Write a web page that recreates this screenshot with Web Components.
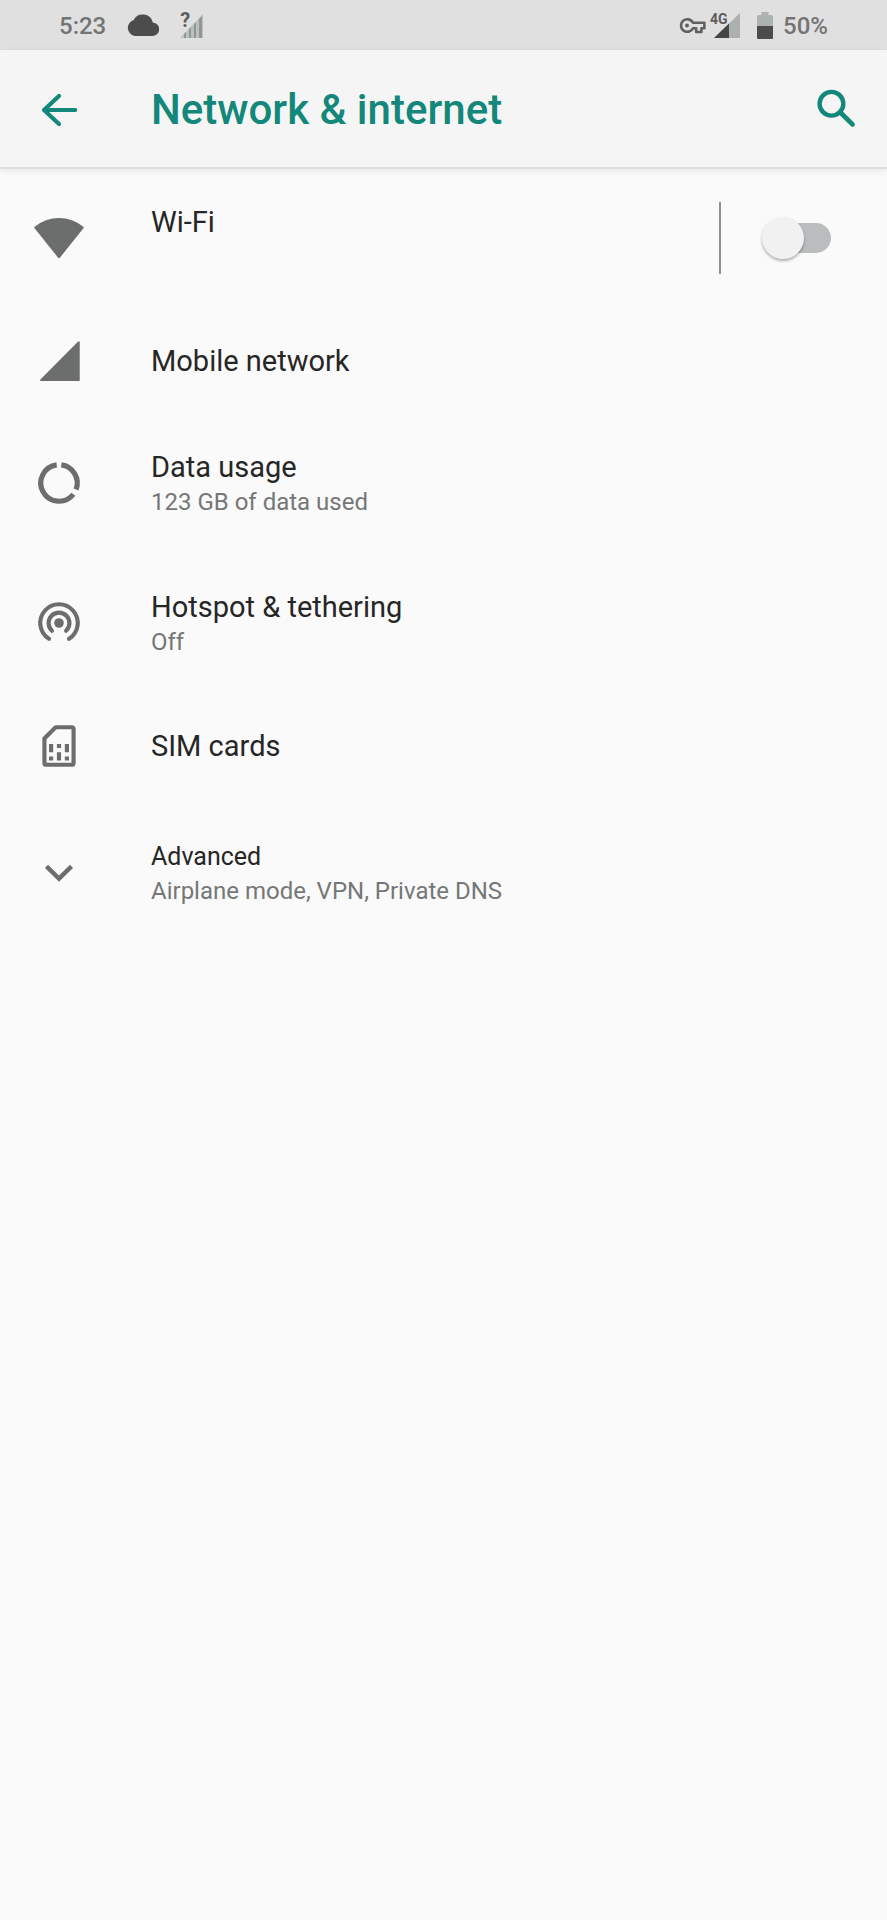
<!DOCTYPE html>
<html lang="en">
<head>
<meta charset="utf-8">
<meta name="viewport" content="width=device-width, initial-scale=1">
<title>Network &amp; internet</title>
<style>
  body{
    margin: 0;
    min-height: 100vh;
    background: #fafafa;
    color: #262626;
    font-family: Roboto, "Liberation Sans", sans-serif;
    --accent: #12877a;
    --muted: #757777;
    --icon: #6c6e6e;
  }
  main{
    display: block;
  }
</style>
</head>
<body>
  <status-bar time="5:23" battery="50%"></status-bar>
  <app-header>Network &amp; internet</app-header>
  <main>
    <settings-row icon="wifi" tall>
      Wi-Fi
      <toggle-switch slot="end" label="Wi-Fi"></toggle-switch>
    </settings-row>
    <settings-row icon="signal">Mobile network</settings-row>
    <settings-row icon="data" tall>
      Data usage
      <span slot="summary">123 GB of data used</span>
    </settings-row>
    <settings-row icon="hotspot" tall>
      Hotspot &amp; tethering
      <span slot="summary">Off</span>
    </settings-row>
    <settings-row icon="sim">SIM cards</settings-row>
    <settings-row icon="chevron" tall small>
      Advanced
      <span slot="summary">Airplane mode, VPN, Private DNS</span>
    </settings-row>
  </main>

<script>
// all drawn on a 24 x 24 grid
const ICONS = {
  back: `<path d="M19.8 12H4.8M12 5.3L4.8 12L12 18.7" fill="none" stroke="currentColor" stroke-width="2" stroke-linecap="round" stroke-linejoin="round"/>`,
  search: `<g fill="none" stroke="currentColor"><circle cx="10.3" cy="9" r="5.7" stroke-width="2.1"/><path d="M14.6 13.2L20.4 18.9" stroke-width="2.3" stroke-linecap="round"/></g>`,
  wifi: `<path d="M.7 7A17.6 17.6 0 0 1 23.3 7L12 21.1Z" fill="currentColor" stroke="currentColor" stroke-width="1.1" stroke-linejoin="round"/>`,
  signal: `<path d="M3.4 21.2L21.5 3V21.2Z" fill="currentColor" stroke="currentColor" stroke-width=".9" stroke-linejoin="round"/>`,
  data: `<path d="M13.1 3.32A8.75 8.75 0 0 1 20.18 15.1M18.9 17.4A8.75 8.75 0 1 1 10.9 3.32" fill="none" stroke="currentColor" stroke-width="2.5"/>`,
  hotspot: `<circle cx="12" cy="12" r="2.3" fill="currentColor"/><path d="M8.6 15.7A5 5 0 1 1 15.4 15.7M7.2 19.6A9 9 0 1 1 16.8 19.6" fill="none" stroke="currentColor" stroke-width="2" stroke-linecap="round"/>`,
  sim: `<path d="M10.4 3H18Q19 3 19 4V20Q19 21 18 21H6Q5 21 5 20V8.4Z" fill="none" stroke="currentColor" stroke-width="2" stroke-linejoin="round"/><path d="M7.2 11h2v4h-2zM7.2 17h2v2h-2zM11 11h2v2h-2zM11 15h2v4h-2zM14.8 11h2v4h-2zM14.8 17h2v2h-2z" fill="currentColor"/>`,
  chevron: `<path d="M6 8.8L12 14.7L18 8.8" fill="none" stroke="currentColor" stroke-width="2.1"/>`
};

class appIcon extends HTMLElement{
  constructor(){
    super();
    this.attachShadow({mode:'open'});
  }
  connectedCallback(){
    this.shadowRoot.innerHTML = `
      <style>
        :host{
          display: block;
          flex: none;
          width: 50px;
          height: 50px;
        }
        svg{
          display: block;
          width: 100%;
          height: 100%;
        }
      </style>
      <svg viewBox="0 0 24 24" aria-hidden="true">${ICONS[this.getAttribute('name')] || ''}</svg>
    `;
  }
}
customElements.define('app-icon',appIcon);


// status bar
class statusBar extends HTMLElement{
  constructor(){
    super();
    this.attachShadow({mode:'open'});
  }
  connectedCallback(){
    this.shadowRoot.innerHTML = `
      <style>
        :host{
          display: flex;
          justify-content: space-between;
          align-items: center;
          box-sizing: border-box;
          height: 50px;
          padding: 2px 59px 0;
          background: #e0e0e0;
          color: #747474;
          font-size: 24px;
          font-weight: 500;
          line-height: 32px;
        }
        .group{
          display: flex;
          align-items: center;
          gap: 21px;
        }
        .end{
          gap: 10px;
        }
        .radio{
          display: flex;
          gap: 4px;
          margin-right: 6px;
        }
        svg{
          display: block;
        }
        .signal{
          position: relative;
        }
        .signal span{
          position: absolute;
          top: 0;
          left: 0;
          font-size: 14px;
          line-height: 14px;
          font-weight: 700;
          color: #5c5c5c;
        }
        .signal .unknown{
          font-size: 20px;
          line-height: 16px;
        }
      </style>
      <div class="group">
        <span>${this.getAttribute('time')}</span>
        <svg width="32" height="28" viewBox="0 0 32 28" fill="#4c4c4c"><path d="M25.8 10.4A10.3 10.3 0 0 0 6.7 8A8.2 8.2 0 0 0 8 24H25A6.8 6.8 0 0 0 25.8 10.4Z"/></svg>
        <div class="signal">
          <svg width="23" height="28" viewBox="0 0 23 28"><path d="M0 26L23 2V26Z" fill="#bcc0c0"/><path d="M4 26V22L6 20V26ZM9 26V17L11 15V26ZM14 26V12L16 10V26ZM19 26V7L22 4V26Z" fill="#8e9696"/></svg>
          <span class="unknown">?</span>
        </div>
      </div>
      <div class="group end">
        <div class="radio">
          <svg width="27" height="28" viewBox="0 0 27 28" fill="none" stroke="#606060" stroke-width="2.6" stroke-linejoin="round"><path d="M14 10.8A6.3 6.3 0 1 0 14 16.2H17.2V20H22.4V16.2H25.4V10.8Z"/><circle cx="8" cy="13.5" r="2" fill="#606060" stroke="none"/></svg>
          <div class="signal">
            <svg width="31" height="28" viewBox="0 0 31 28"><path d="M4 26L30 1V26Z" fill="#acb0b0"/><path d="M4 26L19 11.6V26Z" fill="#454545"/></svg>
            <span>4G</span>
          </div>
        </div>
        <svg width="16" height="28" viewBox="0 0 16 28"><path d="M0 15V5Q0 3 2 3H4.5V0H11.5V3H14Q16 3 16 5V15Z" fill="#acb2b0"/><path d="M0 14H16V26Q16 27 15 27H1Q0 27 0 26Z" fill="#4c4c4c"/></svg>
        <span>${this.getAttribute('battery')}</span>
      </div>
    `;
  }
}
customElements.define('status-bar',statusBar);


class appHeader extends HTMLElement{
  constructor(){
    super();
    this.attachShadow({mode:'open'});
    this.shadowRoot.innerHTML = `
      <style>
        :host{
          display: block;
          position: relative;
          color: var(--accent);
          background: #f5f5f5;
          border-bottom: 1px solid #dedede;
          box-shadow: 0 1px 0 #dedede, 0 2px 7px rgba(0,0,0,0.09);
        }
        header{
          display: flex;
          align-items: center;
          min-height: 115px;
          padding: 2px 27px 0 34px;
        }
        h1{
          flex: 1;
          margin: 0 0 0 67px;
          font-size: 42px;
          line-height: 50px;
          font-weight: 500;
        }
        button{
          padding: 0;
          border: 0;
          background: none;
          color: inherit;
          cursor: pointer;
        }
      </style>
      <header>
        <button type="button" aria-label="Navigate up"><app-icon name="back"></app-icon></button>
        <h1><slot></slot></h1>
        <button type="button" aria-label="Search"><app-icon name="search"></app-icon></button>
      </header>
    `;
  }
}
customElements.define('app-header',appHeader);


// one preference, with an optional summary and end widget
class settingsRow extends HTMLElement{
  constructor(){
    super();
    this.attachShadow({mode:'open'});
  }
  connectedCallback(){
    this.shadowRoot.innerHTML = `
      <style>
        :host{
          display: flex;
          align-items: center;
          min-height: 105px;
        }
        :host([tall]){
          min-height: 140px;
        }
        :host([small]){
          min-height: 150px;
        }
        a{
          flex: 1;
          display: flex;
          align-items: center;
          gap: 67px;
          padding-left: 34px;
          color: inherit;
          text-decoration: none;
        }
        app-icon{
          color: var(--icon);
        }
        .title{
          font-size: 29px;
          line-height: 38px;
        }
        :host([small]) .title{
          font-size: 25px;
          line-height: 36px;
        }
        .summary{
          font-size: 24px;
          line-height: 32px;
          color: var(--muted);
        }
        :host([tall]) .summary{
          min-height: 32px;
        }
      </style>
      <a href="#${this.getAttribute('icon')}">
        <app-icon name="${this.getAttribute('icon')}"></app-icon>
        <div>
          <div class="title"><slot></slot></div>
          <div class="summary"><slot name="summary"></slot></div>
        </div>
      </a>
      <slot name="end"></slot>
    `;
  }
}
customElements.define('settings-row',settingsRow);


class toggleSwitch extends HTMLElement{
  constructor(){
    super();
    this.attachShadow({mode:'open'});
  }
  connectedCallback(){
    this.shadowRoot.innerHTML = `
      <style>
        :host{
          display: flex;
          align-items: center;
          height: 72px;
          padding: 0 56px 0 41px;
          border-left: 2px solid #8c9090;
        }
        input{
          appearance: none;
          display: flex;
          align-items: center;
          width: 69px;
          height: 30px;
          margin: 0;
          border-radius: 15px;
          background: linear-gradient(#babdbe,#babdbe) right center / 54px 30px no-repeat;
          cursor: pointer;
        }
        input::before{
          content: "";
          flex: none;
          width: 42px;
          height: 42px;
          border-radius: 50%;
          background: #f1f1f1;
          box-shadow: 0 2px 3px rgba(0,0,0,0.3);
        }
        input:checked{
          justify-content: flex-end;
        }
      </style>
      <input type="checkbox" role="switch" aria-label="${this.getAttribute('label')}">
    `;
  }
}
customElements.define('toggle-switch',toggleSwitch);
</script>
</body>
</html>
